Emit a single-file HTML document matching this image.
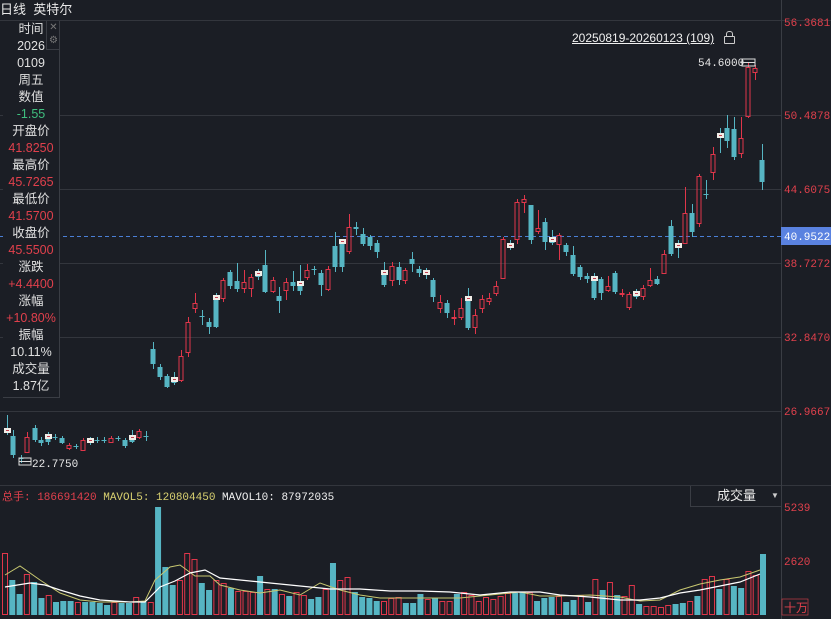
<!DOCTYPE html>
<html><head><meta charset="utf-8"><style>
html,body{margin:0;padding:0;background:#1b1e25;width:831px;height:619px;overflow:hidden;font-family:"Liberation Sans","Noto Sans CJK SC",sans-serif}
#top{position:absolute;left:0;top:0;width:780px;height:20px;color:#e8e8e8;font-size:13px;line-height:20px}
#panel{position:absolute;left:3px;top:21px;width:56px;height:376px;border-right:1px solid #3a3d44;border-bottom:1px solid #3a3d44;background:#1b1e25;text-align:center;font-size:12.5px;line-height:17px;color:#e0e0e0}
.r{color:#e0404c}.g{color:#3fbf7f}
</style></head><body>
<svg id="s" width="831" height="619" style="position:absolute;left:0;top:0" font-family="Liberation Mono, monospace"></svg>
<div id="top">日线&nbsp;&nbsp;英特尔</div>
<div id="panel">
<div>时间</div><div>2026</div><div>0109</div><div>周五</div><div>数值</div><div class="g">-1.55</div><div>开盘价</div><div class="r">41.8250</div><div>最高价</div><div class="r">45.7265</div><div>最低价</div><div class="r">41.5700</div><div>收盘价</div><div class="r">45.5500</div><div>涨跌</div><div class="r">+4.4400</div><div>涨幅</div><div class="r">+10.80%</div><div>振幅</div><div>10.11%</div><div>成交量</div><div>1.87亿</div>
</div>
<div style="position:absolute;left:46px;top:21px;width:13px;height:28px;border-left:1px solid #3a3d44;border-bottom:1px solid #3a3d44;color:#777;font-size:10px;line-height:13px;text-align:center">✕<br>⚙</div>
<div style="position:absolute;left:572px;top:31px;color:#f0f0f0;font-size:12px;text-decoration:underline">20250819-20260123 (109)</div>
<div style="position:absolute;left:724px;top:36px;width:9px;height:6px;border:1px solid #ccc;border-radius:1px"></div>
<div style="position:absolute;left:726px;top:31px;width:5px;height:5px;border:1px solid #ccc;border-bottom:none;border-radius:3px 3px 0 0"></div>
<div style="position:absolute;left:690px;top:486px;width:90px;height:20px;border-left:1px solid #3a3d44;border-bottom:1px solid #3a3d44;color:#e8e8e8;font-size:13px;line-height:20px"><span style="position:absolute;left:26px">成交量</span><span style="position:absolute;left:80px;font-size:8px;color:#ccc">▼</span></div>
<script>
var s=document.getElementById('s'),h='';
function L(x1,y1,x2,y2,c,d){h+='<line x1="'+x1+'" y1="'+y1+'" x2="'+x2+'" y2="'+y2+'" stroke="'+c+'" stroke-width="1"'+(d?' stroke-dasharray="4,3"':'')+'/>';}
function T(x,y,t,c,fs){h+='<text x="'+x+'" y="'+y+'" fill="'+c+'" font-size="'+(fs||11)+'">'+t+'</text>';}
var gc='#33363d';
L(0,20.5,831,20.5,gc);
[115,189,263,337,411].forEach(function(y){L(0,y+.5,781,y+.5,gc)});
L(0,485.5,831,485.5,gc);
L(781.5,0,781.5,619,'#3a3d44');
L(0,236.5,781,236.5,'#4a7fd6',1);
h+='<rect x="781" y="227" width="50" height="18" fill="#5a82e0"/>';
T(784,240,'40.9522','#fff');
[[26,'56.3681'],[119,'50.4878'],[193,'44.6075'],[267,'38.7272'],[341,'32.8470'],[415,'26.9667']].forEach(function(a){T(784,a[0],a[1],'#e0404c')});
T(784,511,'5239','#e0404c');T(784,565,'2620','#e0404c');
h+='<text x="784" y="612" fill="#e0404c" font-size="12" font-family="Liberation Sans,Noto Sans CJK SC,sans-serif">十万</text>';
h+='<rect x="782" y="599" width="26" height="16" fill="none" stroke="#e0404c" stroke-width="0.6"/>';
var R='#e0364a',B='#56b5c3';
var c=[[7,428,433,415,435,'f'],[13,436,455,430,458,'b'],[21,458,459,455,463,'b'],[27,437,452,432,453,'r'],[35,428,440,425,442,'b'],[41,440,443,437,446,'b'],[48,434,442,432,445,'f'],[55,437,438,434,440,'b'],[62,438,443,436,444,'b'],[69,445,448,443,450,'r'],[76,446,447,444,449,'b'],[83,440,450,438,451,'r'],[90,438,443,437,445,'f'],[97,440,441,437,443,'b'],[104,440,441,437,443,'b'],[111,438,442,436,443,'r'],[118,438,439,436,441,'b'],[125,440,446,438,448,'b'],[132,435,442,430,443,'f'],[139,431,437,429,439,'r'],[146,436,437,431,441,'b'],
[153,349,364,342,369,'b'],[160,367,377,364,380,'b'],[167,376,387,374,388,'b'],[174,377,383,372,385,'f'],[181,356,380,350,382,'r'],[188,322,352,317,357,'r'],[195,303,308,293,313,'r'],[202,316,317,310,325,'b'],[209,322,327,318,334,'b'],[216,295,327,293,328,'f'],[223,280,298,278,302,'r'],[230,272,286,270,289,'b'],[237,281,289,263,292,'b'],[244,282,288,270,293,'r'],[251,277,288,274,297,'r'],[258,271,277,269,280,'f'],[265,265,292,250,293,'b'],[273,280,291,277,293,'r'],[279,296,301,287,313,'b'],[286,282,290,278,300,'r'],[293,282,286,271,291,'b'],[300,281,291,265,295,'f'],[307,270,277,264,280,'r'],[314,269,270,266,275,'b'],[321,273,285,270,296,'b'],[328,269,289,266,291,'r'],[335,246,267,232,272,'b'],[342,239,267,240,272,'f'],[349,227,251,214,254,'r'],[356,227,229,222,235,'b'],[363,234,244,228,246,'b'],[370,237,246,235,250,'b'],[377,243,252,240,258,'b'],[384,270,285,262,287,'f'],[392,266,280,262,286,'r'],[399,267,280,262,285,'b'],
[405,270,280,268,284,'r'],[412,259,264,252,272,'b'],[419,269,273,266,277,'b'],[426,270,275,268,279,'f'],[433,280,297,278,302,'b'],[440,302,308,295,313,'r'],[447,303,313,300,318,'b'],[454,317,318,310,325,'r'],[461,308,317,298,320,'r'],[468,296,328,288,330,'f'],[475,315,327,309,334,'r'],[482,299,308,295,313,'r'],[489,298,301,293,305,'r'],[496,286,293,281,296,'r'],[503,239,278,237,279,'r'],[510,243,248,240,250,'f'],[517,202,239,199,244,'r'],[524,199,202,195,213,'r'],[531,205,240,205,244,'b'],[538,228,231,210,234,'r'],[545,222,242,218,250,'b'],[552,237,243,230,245,'f'],[559,235,244,233,260,'r'],[566,245,252,243,256,'b'],[573,255,274,246,276,'b'],[580,267,277,265,280,'b'],[587,276,279,273,283,'b'],[594,276,298,273,300,'f'],[601,279,293,277,300,'b'],[608,286,290,276,292,'r'],[615,273,292,271,294,'b'],[622,293,294,289,297,'r'],[629,294,307,292,310,'r'],[636,291,297,289,299,'f'],[643,288,296,285,300,'r'],[650,280,285,268,287,'r'],[657,279,284,276,285,'b'],[664,254,273,250,274,'r'],[671,226,254,220,256,'b'],[678,243,248,240,258,'f'],[685,213,243,187,244,'r'],[692,213,232,204,237,'b'],[699,176,223,174,227,'r'],[706,194,195,180,199,'b'],[713,154,172,147,180,'r'],[720,133,138,128,153,'f'],[727,128,141,115,148,'b'],[734,129,157,117,160,'b'],[741,138,153,117,158,'r'],[748,67,116,62,118,'r'],[755,68,72,65,80,'r'],[762,160,182,144,190,'b']];
c.forEach(function(k){var x=k[0],t=k[1],b=k[2];var w=5;
 var bh=Math.max(1,b-t);
 if(k[5]=='f'){L(x+.5,k[3],x+.5,k[4],B);h+='<rect x="'+(x-2.5)+'" y="'+t+'" width="'+w+'" height="'+bh+'" fill="#56b5c3"/>';h+='<rect x="'+(x-3)+'" y="'+t+'" width="7" height="5" fill="#f2eee8"/><rect x="'+(x-1)+'" y="'+(t+2)+'" width="3" height="1" fill="#c04050"/>';return;}
 if(k[5]=='r'){L(x+.5,k[3],x+.5,t,R);L(x+.5,b,x+.5,k[4],R);h+='<rect x="'+(x-2)+'" y="'+(t+.5)+'" width="'+(w-1)+'" height="'+bh+'" fill="none" stroke="'+R+'" stroke-width="1"/>';}
 else{L(x+.5,k[3],x+.5,k[4],B);h+='<rect x="'+(x-2.5)+'" y="'+t+'" width="'+w+'" height="'+bh+'" fill="'+B+'"/>';}
});
h+='<rect x="19" y="458" width="12" height="7" fill="none" stroke="#ddd" stroke-width="1"/>';L(19,461.5,31,461.5,'#ddd');
T(32,467,'22.7750','#e8e8e8');
T(698,66,'54.6000','#e8e8e8');
h+='<rect x="742" y="59" width="13" height="7" fill="none" stroke="#ddd" stroke-width="1"/>';L(742,62.5,755,62.5,'#ddd');
var v='553r580b594b574r582b598b595r602b601b601b602r602b602b603b605b602r603b603b597r602b602r507b567b585b580r553r559r583b590b580r583r588b591r591r592r576b589r589b594r596b592r595r599b597b589r563b580r577r592b597b598b601b601r598r597r603b603b594b599r598b601r601r594b592r595r601r597r599r596r593r593b592b592r601b598b597b596r602b600b595r602b579r590b582r595b596r585r604b606r606r607r605r604b603b601r596b579r576r589b579r586b588b571r575r554b';
var arr=v.match(/\d+[rb]/g);
var sp=(763-5)/(arr.length-1);
arr.forEach(function(a,i){var y=parseInt(a),col=a.slice(-1),x=2+i*sp;
 if(col=='r')h+='<rect x="'+(x+.5)+'" y="'+(y+.5)+'" width="5" height="'+(614-y)+'" fill="none" stroke="'+R+'" stroke-width="1"/>';
 else h+='<rect x="'+x+'" y="'+y+'" width="6" height="'+(615-y)+'" fill="'+B+'"/>';});
h+='<polyline fill="none" stroke="#c8c870" stroke-width="1" points="5,575 20,566 40,580 60,593 80,600 100,602 130,602 145,601 155,580 170,567 180,565 195,576 210,576 220,585 240,590 260,593 280,590 300,595 320,583 340,590 360,595 380,598 400,598 430,598 460,598 490,595 520,592 540,596 560,596 590,595 620,597 640,601 660,600 680,590 700,584 720,580 740,577 760,570"/>';
h+='<polyline fill="none" stroke="#ffffff" stroke-width="1.2" points="5,587 30,583 45,585 60,590 80,596 100,600 130,602 145,602 160,587 175,581 190,573 205,570 220,578 240,580 270,583 310,587 330,589 360,589 390,591 420,591 450,592 480,595 510,592 540,592 560,595 590,597 620,600 640,600 660,598 680,593 700,590 720,586 740,582 760,574"/>';
h+='<text y="500" font-size="11"><tspan x="2" fill="#e0404c" font-family="Liberation Sans,Noto Sans CJK SC,sans-serif">总手</tspan><tspan fill="#e0404c">: 186691420 </tspan><tspan fill="#d8d070">MAVOL5: 120804450 </tspan><tspan fill="#f0f0f0">MAVOL10: 87972035</tspan></text>';
s.innerHTML=h;
</script>
</body></html>
